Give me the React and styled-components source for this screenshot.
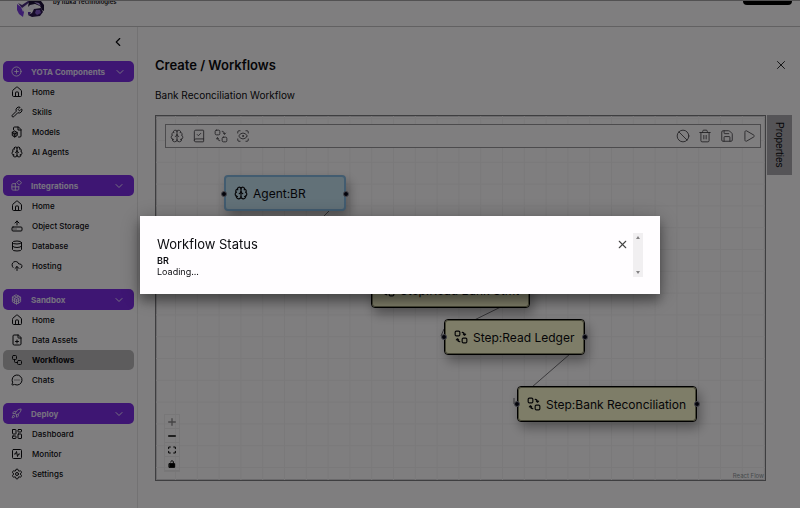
import React from "react";
import styled, { createGlobalStyle } from "styled-components";
import {
  Ban, BookCheck, Brain, ChevronDown, ChevronLeft, CirclePlus, CloudUpload, Database,
  FilePlus, HardDriveUpload, House, LayoutDashboard, MessageCircleMore, Play,
  Rocket, Save, ScanEye, Settings, SquareActivity, Trash2, Workflow, Wrench, X,
} from "lucide-react";

const GlobalStyle = createGlobalStyle`
  *, *::before, *::after { box-sizing: border-box; }
  body { margin: 0; background: #fffdff; color: #0b0b0f; font-family: Inter, "Liberation Sans", sans-serif; }
  button { font: inherit; color: inherit; background: none; border: 0; padding: 0; display: flex; align-items: center; }
  h1, h2, h3, p, ul { margin: 0; padding: 0; }
  ul { list-style: none; }
  svg { display: block; flex: none; }
`;

const Page = styled.div`
  min-height: 100vh;
  display: flex;
  flex-direction: column;
`;

const Header = styled.header`
  height: 27px;
  display: flex;
  align-items: flex-start;
  gap: 8px;
  padding: 0 8px 0 16px;
  overflow: hidden;
  border-top: 1px solid #a5a3a5;
  border-bottom: 1px solid #c4c2c4;
`;

const Byline = styled.span`
  flex: 1;
  font-size: 6px;
  line-height: 2px;
  font-weight: 600;
`;

const AccountButton = styled.button`
  && { background: #000; }
  width: 49px;
  height: 4px;
  border-radius: 0 0 4px 4px;
`;

const Body = styled.div`
  flex: 1;
  display: flex;
`;

const Sidebar = styled.nav`
  width: 138px;
  flex: none;
  border-right: 1px solid #e6e4e6;
  padding: 8px 3px 0 3px;
`;

const CollapseRow = styled.div`
  display: flex;
  justify-content: flex-end;
  padding: 0 9px 0 0;
  margin-bottom: 12px;
`;

const Section = styled.section`
  margin-bottom: 13px;
`;

const SectionButton = styled.button`
  && {
    width: 100%;
    height: 21px;
    gap: 9px;
    padding: 0 9px 0 8px;
    border-radius: 5px;
    background: #7c2ce6;
    color: #ece2ff;
    font-size: 8px;
    font-weight: 700;
  }
`;

const SectionName = styled.span`
  flex: 1;
  text-align: left;
  white-space: nowrap;
`;

const Item = styled.a`
  display: flex;
  align-items: center;
  gap: 9px;
  height: 20px;
  padding: 0 8px;
  border-radius: 5px;
  font-size: 8px;
  font-weight: ${(p) => (p.$active ? 700 : 500)};
  background: ${(p) => (p.$active ? "#bab8ba" : "transparent")};
  color: #0b0b0f;
  text-decoration: none;
`;

const Main = styled.main`
  flex: 1;
  min-width: 0;
  display: flex;
  flex-direction: column;
  padding: 28px 8px 27px 17px;
`;

const TitleRow = styled.div`
  display: flex;
  justify-content: space-between;
  align-items: center;
  height: 20px;
  padding-right: 4px;
`;

const Title = styled.h1`
  font-size: 13px;
  line-height: 20px;
  font-weight: 600;
`;

const Subtitle = styled.p`
  font-size: 10px;
  line-height: 16px;
  margin: 12px 0;
`;

const Workspace = styled.div`
  flex: 1;
  display: flex;
  align-items: stretch;
  gap: 1px;
`;

const Canvas = styled.div`
  position: relative;
  flex: 1;
  border: 1px solid #7d7c80;
  outline: 1px solid #d6d4d8;
  outline-offset: -2px;
  padding: 8px 4px 0 9px;
  overflow: hidden;
`;

const CanvasDrawing = styled.svg`
  position: absolute;
  inset: 0;
  width: 100%;
  height: 100%;
`;

const Toolbar = styled.div`
  position: relative;
  display: flex;
  justify-content: space-between;
  height: 24px;
  padding: 0 4px;
  background: #fffdff;
  border: 1px solid #98969a;
  color: #47454a;
`;

const ToolGroup = styled.div`
  display: flex;
  gap: 8px;
`;

const PropertiesTab = styled.button`
  && {
    width: 25px;
    height: 60px;
    justify-content: center;
    background: #aaa8ae;
    font-family: "Liberation Sans", Arial, sans-serif;
    font-size: 10px;
    writing-mode: vertical-rl;
  }
`;

const Node = styled.div`
  position: absolute;
  left: ${(p) => p.$x}px;
  top: ${(p) => p.$y}px;
  display: flex;
  align-items: center;
  gap: 5px;
  min-width: 122px;
  height: 36px;
  padding: ${(p) => (p.$agent ? "0 8px" : "0 10px 0 9px")};
  border: ${(p) => (p.$agent ? "2px solid #84b8e0" : "1px solid #000")};
  outline: ${(p) => (p.$agent ? "none" : "1px solid #8c8c6c")};
  outline-offset: -2px;
  border-radius: 4px;
  background: ${(p) => (p.$agent ? "#c4e2f0" : "#fcfad0")};
  box-shadow: 3px 6px 12px rgba(0, 0, 0, 0.35);
  font-size: 12px;
  white-space: nowrap;
  &::before, &::after {
    content: "";
    position: absolute;
    top: 14px;
    width: 6px;
    height: 6px;
    border: 1px solid #8a8a98;
    border-radius: 50%;
    background: #050514;
  }
  &::before { left: ${(p) => (p.$agent ? "-5px" : "-4px")}; }
  &::after { right: ${(p) => (p.$agent ? "-5px" : "-4px")}; }
`;

const Controls = styled.div`
  position: absolute;
  left: 8px;
  bottom: 8px;
  width: 16px;
  border: 1px solid #f0eef0;
`;

const ControlButton = styled.button`
  && {
    width: 100%;
    height: 14px;
    justify-content: center;
    border-bottom: 1px solid #eeecee;
    color: ${(p) => (p.$dim ? "#8a888a" : "#000")};
  }
`;

const Attribution = styled.a`
  position: absolute;
  right: 1px;
  bottom: 0;
  font-size: 6px;
  line-height: 8px;
  color: #8d9499;
  text-decoration: none;
`;

const Overlay = styled.div`
  position: fixed;
  inset: 0;
  display: flex;
  align-items: center;
  justify-content: center;
  padding-top: 2px;
  background: rgba(0, 0, 0, 0.5);
`;

const Dialog = styled.div`
  width: 65%;
  padding: 17px;
  background: #fffdff;
  box-shadow: 0 7px 10px rgba(0, 0, 0, 0.3), 0 3px 20px rgba(0, 0, 0, 0.3);
`;

const DialogScroll = styled.div`
  display: flex;
  gap: 4px;
`;

const DialogContent = styled.div`
  flex: 1;
`;

const DialogHead = styled.div`
  display: flex;
  align-items: center;
  justify-content: space-between;
`;

const DialogTitle = styled.h2`
  font-size: 13px;
  line-height: 22px;
  font-weight: 400;
`;

const StepName = styled.h3`
  font-size: 9px;
  line-height: 11px;
  font-weight: 600;
`;

const StepState = styled.p`
  font-size: 9px;
  line-height: 11px;
`;

const Scrollbar = styled.div`
  width: 10px;
  padding: 3px 0;
  display: flex;
  flex-direction: column;
  justify-content: space-between;
  align-items: center;
  background: #f1eff1;
  color: #858385;
`;

const Drawing = ({ size = 12, stroke = 2, children }) => (
  <svg width={size} height={size} viewBox="0 0 24 24" fill="none" stroke="currentColor"
    strokeWidth={stroke} strokeLinecap="round" strokeLinejoin="round" aria-hidden="true">
    {children}
  </svg>
);

const StepsIcon = ({ size, strokeWidth }) => (
  <Drawing size={size} stroke={strokeWidth}>
    <rect x="2" y="2" width="8" height="8" rx="2" />
    <rect x="14" y="14" width="8" height="8" rx="2" />
    <path d="M14 4c2 0 4 1 4 5m-2-2 2 2 2-2" />
    <path d="M10 20c-2 0-4-1-4-5m-2 2 2-2 2 2" />
  </Drawing>
);

const ModelsIcon = ({ size, strokeWidth }) => (
  <Drawing size={size} stroke={strokeWidth}>
    <path d="M5 7V4a2 2 0 0 1 2-2h8l5 5v13a2 2 0 0 1-2 2h-3" />
    <path d="M14 2v6h6" />
    <path d="M7.500 10l5 3v6l-5 3-5-3v-6z" fill="currentColor" fillOpacity=".35" />
    <path d="m2.500 13 5 3 5-3M7.500 16v6" />
  </Drawing>
);

const BlocksIcon = ({ size, strokeWidth }) => (
  <Drawing size={size} stroke={strokeWidth}>
    <path d="M10 8H4a2 2 0 0 0-2 2v10a2 2 0 0 0 2 2h11a2 2 0 0 0 2-2v-6" />
    <path d="M2 15h15M9.500 8v14" />
    <path d="m18 1 5 5-5 5-5-5z" />
  </Drawing>
);

const CubeIcon = ({ size, strokeWidth }) => (
  <Drawing size={size} stroke={strokeWidth}>
    <path d="m12 2 9 5v10l-9 5-9-5V7z" />
    <path d="m3 7 9 5 9-5M12 12v10M7.500 4.500l9 5v10M16.500 4.500l-9 5v10M3 12l9 5 9-5" />
  </Drawing>
);

const Logo = () => (
  <svg width="29" height="17" viewBox="0 0 29 17" role="img" aria-label="YOTA">
    <path d="M1 3 5 6l3 5-1 5-4-3-2-4z" fill="#7a3ce0" />
    <path d="m5 6 5-4 3-2-1 3-4 4-1 4z" fill="#eee6ff" />
    <path d="m2 2 4 2 6-4h3l-5 4-4 3z" fill="#4a2c80" />
    <path d="m13 5 4-2 3 3-2 3-5 0z" fill="#f4eeff" />
    <path d="M13 0h12l3 4v6l-2-1-2-4-5-2-5 1-2 2z" fill="#1d1038" />
    <path d="m18 8 7-1 2 4-3 4-8 1-4-2 4-2z" fill="#2c1850" />
    <path d="m20 9 4 0 1 3-4 2-2-2z" fill="#8058c8" />
    <path d="m18 1 5 1 2 3-4-2z" fill="#b89ce8" />
    <path d="m12 11 3 0-1 2-2 1z" fill="#5a30a8" />
  </svg>
);

const sections = [
  { name: "YOTA Components", icon: CirclePlus, items: [["Home", House], ["Skills", Wrench], ["Models", ModelsIcon], ["AI Agents", Brain]] },
  { name: "Integrations", icon: BlocksIcon, items: [["Home", House], ["Object Storage", HardDriveUpload], ["Database", Database], ["Hosting", CloudUpload]] },
  { name: "Sandbox", icon: CubeIcon, items: [["Home", House], ["Data Assets", FilePlus], ["Workflows", Workflow], ["Chats", MessageCircleMore]] },
  { name: "Deploy", icon: Rocket, items: [["Dashboard", LayoutDashboard], ["Monitor", SquareActivity], ["Settings", Settings]] },
];

const addTools = [["Add agent", Brain], ["Add task", BookCheck], ["Add step", StepsIcon], ["Inspect", ScanEye]];
const runTools = [["Clear", Ban], ["Delete", Trash2], ["Save", Save], ["Run", Play]];

const nodes = [
  { label: "Agent:BR", x: 68, y: 59, agent: true },
  { label: "Step:Read Bank Stmt", x: 215, y: 156 },
  { label: "Step:Read Ledger", x: 288, y: 203 },
  { label: "Step:Bank Reconciliation", x: 361, y: 270 },
];

const Tools = ({ tools }) => (
  <ToolGroup>
    {tools.map(([label, Icon]) => (
      <button key={label} type="button" aria-label={label}><Icon size={14} strokeWidth={1.5} /></button>
    ))}
  </ToolGroup>
);

export default function App() {
  return (
    <>
      <GlobalStyle />
      <Page>
        <Header>
          <Logo />
          <Byline>by Ituka Technologies</Byline>
          <AccountButton type="button" aria-label="Account" />
        </Header>
        <Body>
          <Sidebar>
            <CollapseRow>
              <button type="button" aria-label="Collapse sidebar"><ChevronLeft size={14} /></button>
            </CollapseRow>
            {sections.map(({ name, icon: Icon, items }) => (
              <Section key={name}>
                <SectionButton type="button">
                  <Icon size={11} strokeWidth={2} />
                  <SectionName>{name}</SectionName>
                  <ChevronDown size={12} />
                </SectionButton>
                <ul>
                  {items.map(([label, ItemIcon]) => (
                    <li key={label}>
                      <Item href="#" $active={label === "Workflows"}>
                        <ItemIcon size={12} strokeWidth={2} />
                        {label}
                      </Item>
                    </li>
                  ))}
                </ul>
              </Section>
            ))}
          </Sidebar>
          <Main>
            <TitleRow>
              <Title>Create / Workflows</Title>
              <button type="button" aria-label="Close workflow"><X size={14} strokeWidth={1.5} /></button>
            </TitleRow>
            <Subtitle>Bank Reconciliation Workflow</Subtitle>
            <Workspace>
              <Canvas>
                <CanvasDrawing aria-hidden="true">
                  <defs>
                    <pattern id="grid" x="19" y="24" width="21.8" height="21.8" patternUnits="userSpaceOnUse">
                      <path d="M.5 0V21.8M0 .5H21.8" stroke="#f5f3f5" fill="none" />
                    </pattern>
                  </defs>
                  <rect width="100%" height="100%" fill="url(#grid)" />
                  <g stroke="#77757a" fill="none">
                    <path d="M173 95 160 108M357 185 300 213M414 238 376 271" />
                    <path d="M285 220l3-7M358 288v-6" />
                  </g>
                </CanvasDrawing>
                <Toolbar>
                  <Tools tools={addTools} />
                  <Tools tools={runTools} />
                </Toolbar>
                {nodes.map(({ label, x, y, agent }) => (
                  <Node key={label} $x={x} $y={y} $agent={agent}>
                    {agent ? <Brain size={14} strokeWidth={2} /> : <StepsIcon size={14} strokeWidth={2} />}
                    {label}
                  </Node>
                ))}
                <Controls>
                  <ControlButton type="button" aria-label="Zoom in" $dim>
                    <Drawing size={8} stroke={4}><path d="M12 2v20M2 12h20" /></Drawing>
                  </ControlButton>
                  <ControlButton type="button" aria-label="Zoom out">
                    <Drawing size={8} stroke={4}><path d="M2 12h20" /></Drawing>
                  </ControlButton>
                  <ControlButton type="button" aria-label="Fit view">
                    <Drawing size={8} stroke={3}><path d="M2 8V3h5M17 3h5v5M22 16v5h-5M7 21H2v-5" /></Drawing>
                  </ControlButton>
                  <ControlButton type="button" aria-label="Toggle interactivity">
                    <Drawing size={8} stroke={3}>
                      <path d="M4 11h16v11H4z" fill="currentColor" />
                      <path d="M8 6c0-5 8-5 8 0v4" />
                    </Drawing>
                  </ControlButton>
                </Controls>
                <Attribution href="#">React Flow</Attribution>
              </Canvas>
              <PropertiesTab type="button">Properties</PropertiesTab>
            </Workspace>
          </Main>
        </Body>
      </Page>
      <Overlay>
        <Dialog role="dialog" aria-modal="true" aria-labelledby="status-title">
          <DialogScroll>
            <DialogContent>
              <DialogHead>
                <DialogTitle id="status-title">Workflow Status</DialogTitle>
                <button type="button" aria-label="Close"><X size={13} strokeWidth={2} color="#444" /></button>
              </DialogHead>
              <StepName>BR</StepName>
              <StepState>Loading...</StepState>
            </DialogContent>
            <Scrollbar aria-hidden="true">
              <svg width="4" height="3" viewBox="0 0 4 3"><path d="M0 3 2 0l2 3z" fill="currentColor" /></svg>
              <svg width="4" height="3" viewBox="0 0 4 3"><path d="M0 0h4L2 3z" fill="currentColor" /></svg>
            </Scrollbar>
          </DialogScroll>
        </Dialog>
      </Overlay>
    </>
  );
}
